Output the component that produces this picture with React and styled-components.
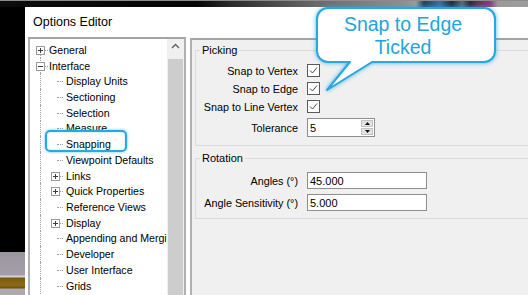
import React from 'react';
import styled, { createGlobalStyle } from 'styled-components';

const Global = createGlobalStyle`
  html, body { margin: 0; padding: 0; background: #000; }
  body {
    width: 528px; height: 295px; overflow: hidden;
    font-family: "Liberation Sans", Arial, sans-serif;
  }
`;

const Screen = styled.div`
  position: relative;
  width: 560px;
  height: 295px;
  overflow: hidden;
  display: flex;
  flex-direction: column;
  background: #000;
`;

const TopStrip = styled.div`
  flex: none;
  height: 7px;
  box-sizing: border-box;
  border-top: 1px solid #8c8c8c;
  background: linear-gradient(
    to right,
    #0c0c0c 0px, #050505 196px, #2a2a2a 230px, #6c6c6c 320px,
    #8e8e8e 400px, #9a9a9a 416px, #24405e 424px, #3d6e9e 440px,
    #1d2c3c 452px, #5c6a7c 462px, #2a2a34 470px, #6a2e5c 478px,
    #8a3c78 490px, #9a9a9a 498px, #a0a0a0 560px
  );
`;

const MainRow = styled.div`
  flex: none;
  height: 300px;
  display: flex;
`;

const Scene = styled.div`
  flex: none;
  width: 25px;
  background: linear-gradient(
    to bottom,
    #000 0px, #000 245px, #9c96a0 245px, #a39ea7 268px,
    #dcd8dc 269px, #cfc9cf 270px, #7a5a0c 271px, #8a6a14 278px,
    #6e520a 281px, #b0aab2 282px, #a6a0a8 300px
  );
`;

const Dialog = styled.div`
  flex: 1;
  display: flex;
  flex-direction: column;
  background: #fff;
`;

const TitleBar = styled.div`
  flex: none;
  height: 30px;
  display: flex;
  align-items: center;
  padding-left: 8px;
  font-size: 12.5px;
  color: #000;
`;

const DialogBody = styled.div`
  flex: 1;
  display: flex;
  gap: 4px;
  padding-left: 3px;
  min-height: 0;
`;

const TreePane = styled.div`
  flex: none;
  width: 158px;
  box-sizing: border-box;
  border: 2px solid #b0b0b0;
  border-top-color: #a4a4a4;
  display: flex;
  background: #fff;
`;

const TreeList = styled.div`
  flex: 1;
  min-width: 0;
  overflow: hidden;
  padding-top: 3px;
`;

const TreeRow = styled.div`
  display: flex;
  height: 15.73px;
  align-items: center;
  white-space: nowrap;
`;

const Cell = styled.span`
  position: relative;
  flex: none;
  align-self: stretch;
  width: ${p => p.$w}px;
  &::before {
    content: '';
    position: absolute;
    left: ${p => p.$lineX || 0}px;
    top: ${p => (p.$vline === 'bottom' ? '50%' : '0')};
    bottom: 0;
    border-left: 1px dotted #a0a0a0;
    display: ${p => (p.$vline === 'none' ? 'none' : 'block')};
  }
  &::after {
    content: '';
    position: absolute;
    top: 50%;
    left: ${p => p.$dashFrom}px;
    width: ${p => p.$dashW}px;
    border-top: 1px dotted #a0a0a0;
  }
`;

const Expander = styled.span`
  position: absolute;
  z-index: 1;
  left: ${p => p.$left}px;
  top: 50%;
  width: 9px;
  height: 9px;
  margin-top: -4px;
  box-sizing: border-box;
  border: 1px solid #9a9a9a;
  background: #fff;
  &::before {
    content: '';
    position: absolute;
    left: 1px; top: 3px;
    width: 5px; height: 1px;
    background: #3c3c3c;
  }
  &::after {
    content: '';
    position: absolute;
    left: 3px; top: 1px;
    width: 1px; height: 5px;
    background: #3c3c3c;
    display: ${p => (p.$open ? 'none' : 'block')};
  }
`;

const TreeLabel = styled.span`
  padding-left: 1px;
  font-size: 10.6px;
  color: #000;
`;

const ScrollBar = styled.div`
  flex: none;
  width: 17px;
  display: flex;
  flex-direction: column;
  background: #f0f0f0;
`;

const ArrowBtn = styled.div`
  flex: none;
  height: 20px;
  box-sizing: border-box;
  padding-top: 4px;
  display: flex;
  justify-content: center;
  align-items: flex-start;
`;

const Thumb = styled.div`
  flex: 1;
  margin: 0 1px 0 1px;
  background: #cdcdcd;
`;

const RightPanel = styled.div`
  flex: 1;
  margin-top: 1px;
  box-sizing: border-box;
  border: 2px solid #b0b0b0;
  border-top-color: #a4a4a4;
  background: #f0f0f0;
  padding: 4px 0 0 3px;
  display: flex;
  flex-direction: column;
`;

const Group = styled.fieldset`
  margin: ${p => (p.$first ? '0' : '6px')} 0 0 0;
  padding: 7px 0 ${p => p.$pb}px 0;
  border: 1px solid #dcdcdc;
  min-width: 0;
`;

const Legend = styled.legend`
  margin-left: 4px;
  padding: 0 2px;
  font-size: 11px;
  line-height: 13px;
  color: #000;
`;

const FormGrid = styled.div`
  display: grid;
  grid-template-columns: 102px auto;
  column-gap: 9px;
  row-gap: ${p => p.$gap}px;
  align-items: center;
  justify-items: start;
`;

const FieldLabel = styled.span`
  justify-self: end;
  font-size: 10.8px;
  color: #000;
  white-space: nowrap;
`;

const CheckBox = styled.span`
  width: 13px;
  height: 13px;
  box-sizing: border-box;
  border: 1px solid #5a5a5a;
  background: #fff;
  display: flex;
  align-items: center;
  justify-content: center;
`;

const TextBox = styled.div`
  width: ${p => p.$w}px;
  height: ${p => p.$h}px;
  box-sizing: border-box;
  border: 1px solid #8e8e8e;
  background: #fff;
  display: flex;
  align-items: center;
  font-size: 11px;
  color: #000;
`;

const BoxText = styled.span`
  flex: 1;
  padding-left: 2px;
`;

const SpinCol = styled.div`
  flex: none;
  align-self: stretch;
  width: 12px;
  margin: 1px 1px 1px 0;
  display: flex;
  flex-direction: column;
  gap: 1px;
`;

const SpinBtn = styled.div`
  flex: 1;
  background: #e3e3e3;
  border: 1px solid #c4c4c4;
  display: flex;
  align-items: center;
  justify-content: center;
`;

const Highlight = styled.div`
  position: absolute;
  left: 45px;
  top: 130px;
  width: 82px;
  height: 22px;
  box-sizing: border-box;
  border: 2px solid #29a8e0;
  border-radius: 5px;
  box-shadow: 0 0 3px rgba(41, 168, 224, 0.7), inset 0 0 2px rgba(41, 168, 224, 0.4);
`;

const Callout = styled.div`
  position: absolute;
  left: 300px;
  top: 0;
  width: 210px;
  height: 100px;
`;

const BubbleSvg = styled.svg`
  position: absolute;
  left: 0;
  top: 0;
  overflow: visible;
  filter: drop-shadow(0 0 2px rgba(41, 168, 224, 0.85));
`;

const BubbleText = styled.div`
  position: absolute;
  left: 17px;
  top: 8px;
  width: 172px;
  height: 54px;
  padding-top: 2px;
  box-sizing: border-box;
  display: flex;
  flex-direction: column;
  align-items: center;
  justify-content: center;
  font-size: 19.5px;
  line-height: 23px;
  color: #22a4dd;
`;

const treeItems = [
  { label: 'General', level: 0, exp: 'closed', first: true },
  { label: 'Interface', level: 0, exp: 'open' },
  { label: 'Display Units', level: 1 },
  { label: 'Sectioning', level: 1 },
  { label: 'Selection', level: 1 },
  { label: 'Measure', level: 1 },
  { label: 'Snapping', level: 1 },
  { label: 'Viewpoint Defaults', level: 1 },
  { label: 'Links', level: 1, exp: 'closed' },
  { label: 'Quick Properties', level: 1, exp: 'closed' },
  { label: 'Reference Views', level: 1 },
  { label: 'Display', level: 1, exp: 'closed' },
  { label: 'Appending and Merging', level: 1 },
  { label: 'Developer', level: 1 },
  { label: 'User Interface', level: 1 },
  { label: 'Grids', level: 1 },
];

function Check() {
  return (
    <CheckBox>
      <svg width="11" height="11" viewBox="0 0 11 11">
        <polyline points="2,5.5 4.5,8 9,2.5" fill="none" stroke="#4a4a4a" strokeWidth="1" />
      </svg>
    </CheckBox>
  );
}

function TreeItem({ it }) {
  const isTop = it.level === 0;
  return (
    <TreeRow>
      <Cell
        $w={18}
        $lineX={10}
        $vline={it.first ? 'bottom' : 'full'}
        $dashFrom={isTop ? 15 : 0}
        $dashW={isTop ? 3 : 0}
      >
        {isTop && <Expander $left={6} $open={it.exp === 'open'} />}
      </Cell>
      {!isTop && (
        <Cell
          $w={17}
          $vline="none"
          $dashFrom={it.exp ? 12 : 9}
          $dashW={it.exp ? 3 : 6}
        >
          {it.exp && <Expander $left={3} $open={false} />}
        </Cell>
      )}
      <TreeLabel>{it.label}</TreeLabel>
    </TreeRow>
  );
}

export default function App() {
  return (
    <>
      <Global />
      <Screen>
        <TopStrip />
        <MainRow>
          <Scene />
          <Dialog>
            <TitleBar>Options Editor</TitleBar>
            <DialogBody>
              <TreePane>
                <TreeList>
                  {treeItems.map(it => (
                    <TreeItem key={it.label} it={it} />
                  ))}
                </TreeList>
                <ScrollBar>
                  <ArrowBtn>
                    <svg width="9" height="6" viewBox="0 0 9 6">
                      <path d="M1 5 L4.5 1.5 L8 5" fill="none" stroke="#606060" strokeWidth="1.4" />
                    </svg>
                  </ArrowBtn>
                  <Thumb />
                </ScrollBar>
              </TreePane>
              <RightPanel>
                <Group $first $pb={8}>
                  <Legend>Picking</Legend>
                  <FormGrid $gap={5}>
                    <FieldLabel>Snap to Vertex</FieldLabel>
                    <Check />
                    <FieldLabel>Snap to Edge</FieldLabel>
                    <Check />
                    <FieldLabel>Snap to Line Vertex</FieldLabel>
                    <Check />
                    <FieldLabel>Tolerance</FieldLabel>
                    <TextBox $w={68} $h={19}>
                      <BoxText>5</BoxText>
                      <SpinCol>
                        <SpinBtn>
                          <svg width="5" height="3" viewBox="0 0 5 3"><path d="M0 3 L2.5 0 L5 3 Z" fill="#111" /></svg>
                        </SpinBtn>
                        <SpinBtn>
                          <svg width="5" height="3" viewBox="0 0 5 3"><path d="M0 0 L2.5 3 L5 0 Z" fill="#111" /></svg>
                        </SpinBtn>
                      </SpinCol>
                    </TextBox>
                  </FormGrid>
                </Group>
                <Group $pb={7}>
                  <Legend>Rotation</Legend>
                  <FormGrid $gap={5}>
                    <FieldLabel>Angles (°)</FieldLabel>
                    <TextBox $w={120} $h={17}><BoxText>45.000</BoxText></TextBox>
                    <FieldLabel>Angle Sensitivity (°)</FieldLabel>
                    <TextBox $w={120} $h={17}><BoxText>5.000</BoxText></TextBox>
                  </FormGrid>
                </Group>
              </RightPanel>
            </DialogBody>
          </Dialog>
        </MainRow>
        <Highlight />
        <Callout>
          <BubbleSvg width="210" height="100" viewBox="0 0 210 100">
            <path
              d="M28 8 H184 A11 11 0 0 1 195 19 V51 A11 11 0 0 1 184 62 H72 L27 90 L50 62 H28 A11 11 0 0 1 17 51 V19 A11 11 0 0 1 28 8 Z"
              fill="#fff"
              stroke="#2aa7df"
              strokeWidth="2"
              strokeLinejoin="round"
            />
          </BubbleSvg>
          <BubbleText>
            <span>Snap to Edge</span>
            <span>Ticked</span>
          </BubbleText>
        </Callout>
      </Screen>
    </>
  );
}
